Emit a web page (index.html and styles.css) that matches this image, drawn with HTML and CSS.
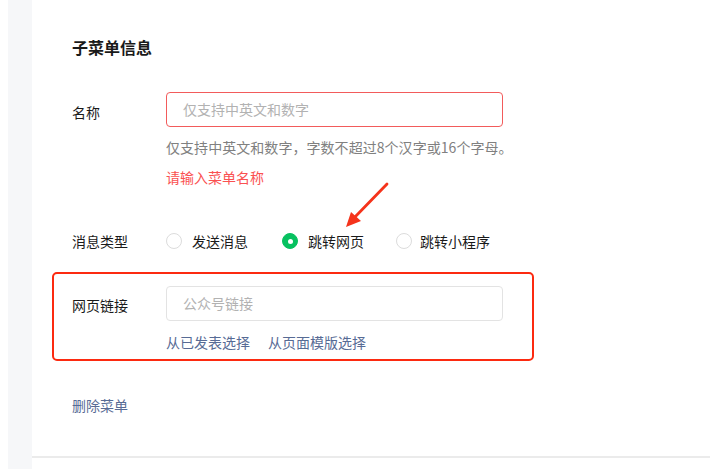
FILE: index.html
```html
<!DOCTYPE html>
<html lang="zh-CN">
<head>
<meta charset="utf-8">
<link rel="stylesheet" href="styles.css">
</head>
<body>
<div class="page">
  <div class="edge"></div>
  <div class="rail"></div>
  <div class="panel">
    <div class="content">
      <h2 class="title">子菜单信息</h2>

      <div class="row row-name">
        <div class="label">名称</div>
        <div class="field">
          <div class="input input-error"><span class="ph">仅支持中英文和数字</span></div>
          <div class="hint">仅支持中英文和数字，字数不超过8个汉字或16个字母。</div>
          <div class="error">请输入菜单名称</div>
        </div>
      </div>

      <div class="row row-type">
        <div class="label label-inline">消息类型</div>
        <div class="radios">
          <div class="radio"><span class="dot"></span>发送消息</div>
          <div class="radio radio-on"><span class="dot"></span>跳转网页</div>
          <div class="radio"><span class="dot"></span>跳转小程序</div>
        </div>
        <svg class="arrow" width="50" height="50" viewBox="0 0 50 50">
          <line x1="45" y1="3" x2="12" y2="37" stroke="#f5331b" stroke-width="2.8" stroke-linecap="round"/>
          <polygon points="4,46 9,31 19,40" fill="#f5331b"/>
        </svg>
      </div>

      <div class="row row-link">
        <div class="mark"></div>
        <div class="label">网页链接</div>
        <div class="field">
          <div class="input"><span class="ph">公众号链接</span></div>
          <div class="links"><a class="link">从已发表选择</a><a class="link">从页面模版选择</a></div>
        </div>
      </div>

      <div class="delete"><a class="link">删除菜单</a></div>
    </div>
    <div class="footer-line"></div>
  </div>
</div>
</body>
</html>
```

FILE: styles.css
```css
* { box-sizing: border-box; }
html, body { margin: 0; padding: 0; background: #fff; }
body {
  font-family: "Noto Sans CJK SC", "Noto Sans", sans-serif;
  color: #1a1a1a;
  font-size: 14px;
}
.page { display: flex; height: 469px; overflow: hidden; }
.edge { width: 8px; background: #fff; }
.rail { width: 24px; background: #f6f7f9; }
.panel { flex: 1; display: flex; flex-direction: column; background: #fff; }
.content { padding-left: 40px; height: 456px; }
.title {
  margin: 35px 0 0;
  font-size: 16px;
  line-height: 24px;
  font-weight: 600;
  color: #1a1a1a;
}
.row { display: flex; position: relative; }
.label { width: 94px; flex: none; line-height: 35px; padding-top: 3px; color: #1a1a1a; }
.row-name { margin-top: 33px; }
.field { width: 337px; }
.input {
  height: 35px;
  border: 1px solid #e3e3e3;
  border-radius: 4px;
  padding-left: 16px;
  line-height: 33px;
  background: #fff;
}
.input-error { border-color: #f25b5b; }
.ph { color: #b2b2b2; }
.hint { margin-top: 9px; line-height: 22px; color: #808080; white-space: nowrap; letter-spacing: 0.05px; }
.error { margin-top: 8px; line-height: 22px; color: #fa5151; }
.row-type { margin-top: 41px; align-items: center; height: 24px; }
.label-inline { line-height: 24px; padding-top: 0; }
.radios { display: flex; align-items: center; }
.radio { display: flex; align-items: center; line-height: 24px; color: #1a1a1a; margin-right: 34px; }
.radio:nth-child(2) { margin-right: 32px; }
.dot {
  width: 16px; height: 16px; border-radius: 50%;
  border: 1px solid #dcdcdc; background: #fff;
  margin-right: 10px; position: relative;
}
.radio:nth-child(3) .dot { margin-right: 8px; }
.radio-on .dot { background: #07c160; border-color: #07c160; }
.radio-on .dot::after {
  content: ""; position: absolute; left: 4.5px; top: 4.5px;
  width: 5px; height: 5px; border-radius: 50%; background: #fff;
}
.arrow { position: absolute; left: 270px; top: -48px; }
.row-link { margin-top: 19px; padding-top: 14px; }
.row-link .label { padding-top: 2px; }
.mark {
  position: absolute; left: -20px; top: 0;
  width: 482px; height: 89px;
  border: 2.4px solid #fc2a10; border-radius: 5px;
  pointer-events: none;
}
.links { margin-top: 10px; line-height: 22px; display: flex; gap: 18px; }
.link { color: #576b95; text-decoration: none; }
.delete { margin-top: 41px; line-height: 22px; }
.footer-line { height: 2px; background: #ebebeb; }
```
